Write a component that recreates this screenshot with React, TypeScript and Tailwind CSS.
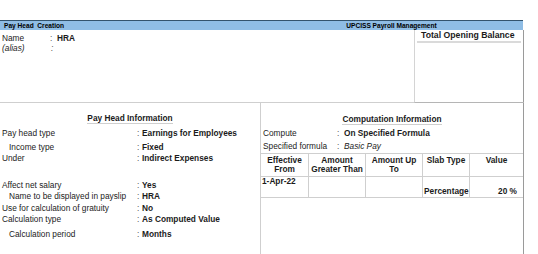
const lines = "border-[#cfcfcf]";

const InfoRow = ({ label, value, indent = false, mt }: { label: string; value: string; indent?: boolean; mt: string }) => (
    <div className={`flex h-[10px] leading-[10px] ${mt}`}>
        <span className={`w-[137px] ${indent ? "pl-[9px]" : "pl-[2px]"}`}>{label}</span>
        <span className="w-[5px] text-[#555]">:</span>
        <span className="font-bold">{value}</span>
    </div>
);

const HeadCell = ({ w, top, bottom, last = false }: { w: string; top: string; bottom?: string; last?: boolean }) => (
    <div className={`${w} ${last ? "" : `border-r ${lines}`} pt-[2px] text-center font-bold leading-[9px]`}>
        <div>{top}</div>
        {bottom && <div>{bottom}</div>}
    </div>
);

export default function App() {
    return (
        <div
            className="w-[538px] h-[254px] overflow-hidden bg-white text-[8.3px] text-[#1b1b1b]"
            style={{ fontFamily: '"Liberation Sans", Arial, sans-serif' }}
        >
            <div className="h-[20px]" />

            {/* title bar */}
            <div className="flex w-[523px] h-[10px] border-t border-[#33536d] bg-[#8fbde5] text-[6.6px] font-bold leading-[9px] text-black">
                <div className="w-[260px] pl-[4px] whitespace-pre">Pay Head  Creation</div>
                <div className="flex-1 text-center">UPCISS Payroll Management</div>
            </div>

            {/* top section */}
            <div className={`flex w-[524px] h-[73px] border-r border-r-[#9a9a9a] border-b ${lines}`}>
                <div className="flex-1 pt-[3px]">
                    <div className="flex h-[10px] leading-[10px]">
                        <span className="w-[50px] pl-[2px]">Name</span>
                        <span className="w-[7px] text-[#555]">:</span>
                        <span className="font-bold">HRA</span>
                    </div>
                    <div className="flex h-[10px] leading-[10px] italic">
                        <span className="w-[51px] pl-[2px]">(alias)</span>
                        <span className="text-[#555]">:</span>
                    </div>
                </div>
                <div className="w-[109px] border-l border-[#d4d4d4] border-b border-b-[#b5b5b5] -mb-px">
                    <div className="mx-[2px] border-b-2 border-[#dadada] pl-[4px] text-[8.7px] font-bold leading-[11px]">
                        Total Opening Balance
                    </div>
                </div>
            </div>

            {/* bottom section */}
            <div className="flex w-[524px] h-[152px] border-r border-r-[#9a9a9a]">
                <div className={`w-[261px] border-r ${lines} pt-[10px]`}>
                    <div className="flex justify-center">
                        <div className={`border-b ${lines} font-bold leading-[10px]`}>Pay Head Information</div>
                    </div>
                    <InfoRow mt="mt-[4px]" label="Pay head type" value="Earnings for Employees" />
                    <InfoRow mt="mt-[4px]" indent label="Income type" value="Fixed" />
                    <InfoRow mt="mt-[1px]" label="Under" value="Indirect Expenses" />
                    <InfoRow mt="mt-[17px]" label="Affect net salary" value="Yes" />
                    <InfoRow mt="mt-[1px]" indent label="Name to be displayed in payslip" value="HRA" />
                    <InfoRow mt="mt-[2px]" label="Use for calculation of gratuity" value="No" />
                    <InfoRow mt="mt-[1px]" label="Calculation type" value="As Computed Value" />
                    <InfoRow mt="mt-[5px]" indent label="Calculation period" value="Months" />
                </div>

                <div className="flex-1 pt-[11px]">
                    <div className="flex justify-center">
                        <div className={`border-b ${lines} font-bold leading-[10px]`}>Computation Information</div>
                    </div>
                    <div className="mt-[3px] flex h-[10px] leading-[10px]">
                        <span className="w-[76px] pl-[2px]">Compute</span>
                        <span className="w-[7px] text-[#555]">:</span>
                        <span className="font-bold">On Specified Formula</span>
                    </div>
                    <div className="mt-[3px] flex h-[10px] leading-[10px]">
                        <span className="w-[76px] pl-[2px]">Specified formula</span>
                        <span className="w-[7px] text-[#555]">:</span>
                        <span className="italic">Basic Pay</span>
                    </div>

                    {/* slab table */}
                    <div className={`mt-[2px] border-t ${lines}`}>
                        <div className={`flex h-[23px] border-b ${lines}`}>
                            <HeadCell w="w-[48px]" top="Effective" bottom="From" />
                            <HeadCell w="w-[57px]" top="Amount" bottom="Greater Than" />
                            <HeadCell w="w-[57px]" top="Amount Up" bottom="To" />
                            <HeadCell w="w-[47px]" top="Slab Type" />
                            <HeadCell w="flex-1" top="Value" last />
                        </div>
                        <div className={`flex h-[21px] border-b ${lines} font-bold leading-[9px]`}>
                            <div className={`w-[48px] border-r ${lines} pl-[1px]`}>1-Apr-22</div>
                            <div className={`w-[57px] border-r ${lines}`} />
                            <div className={`w-[57px] border-r ${lines}`} />
                            <div className={`w-[47px] border-r ${lines} flex items-end pl-[1px] pb-[1px]`}>Percentage</div>
                            <div className="flex-1 flex items-end justify-end pr-[6px] pb-[1px]">20 %</div>
                        </div>
                    </div>
                </div>
            </div>
        </div>
    );
}
